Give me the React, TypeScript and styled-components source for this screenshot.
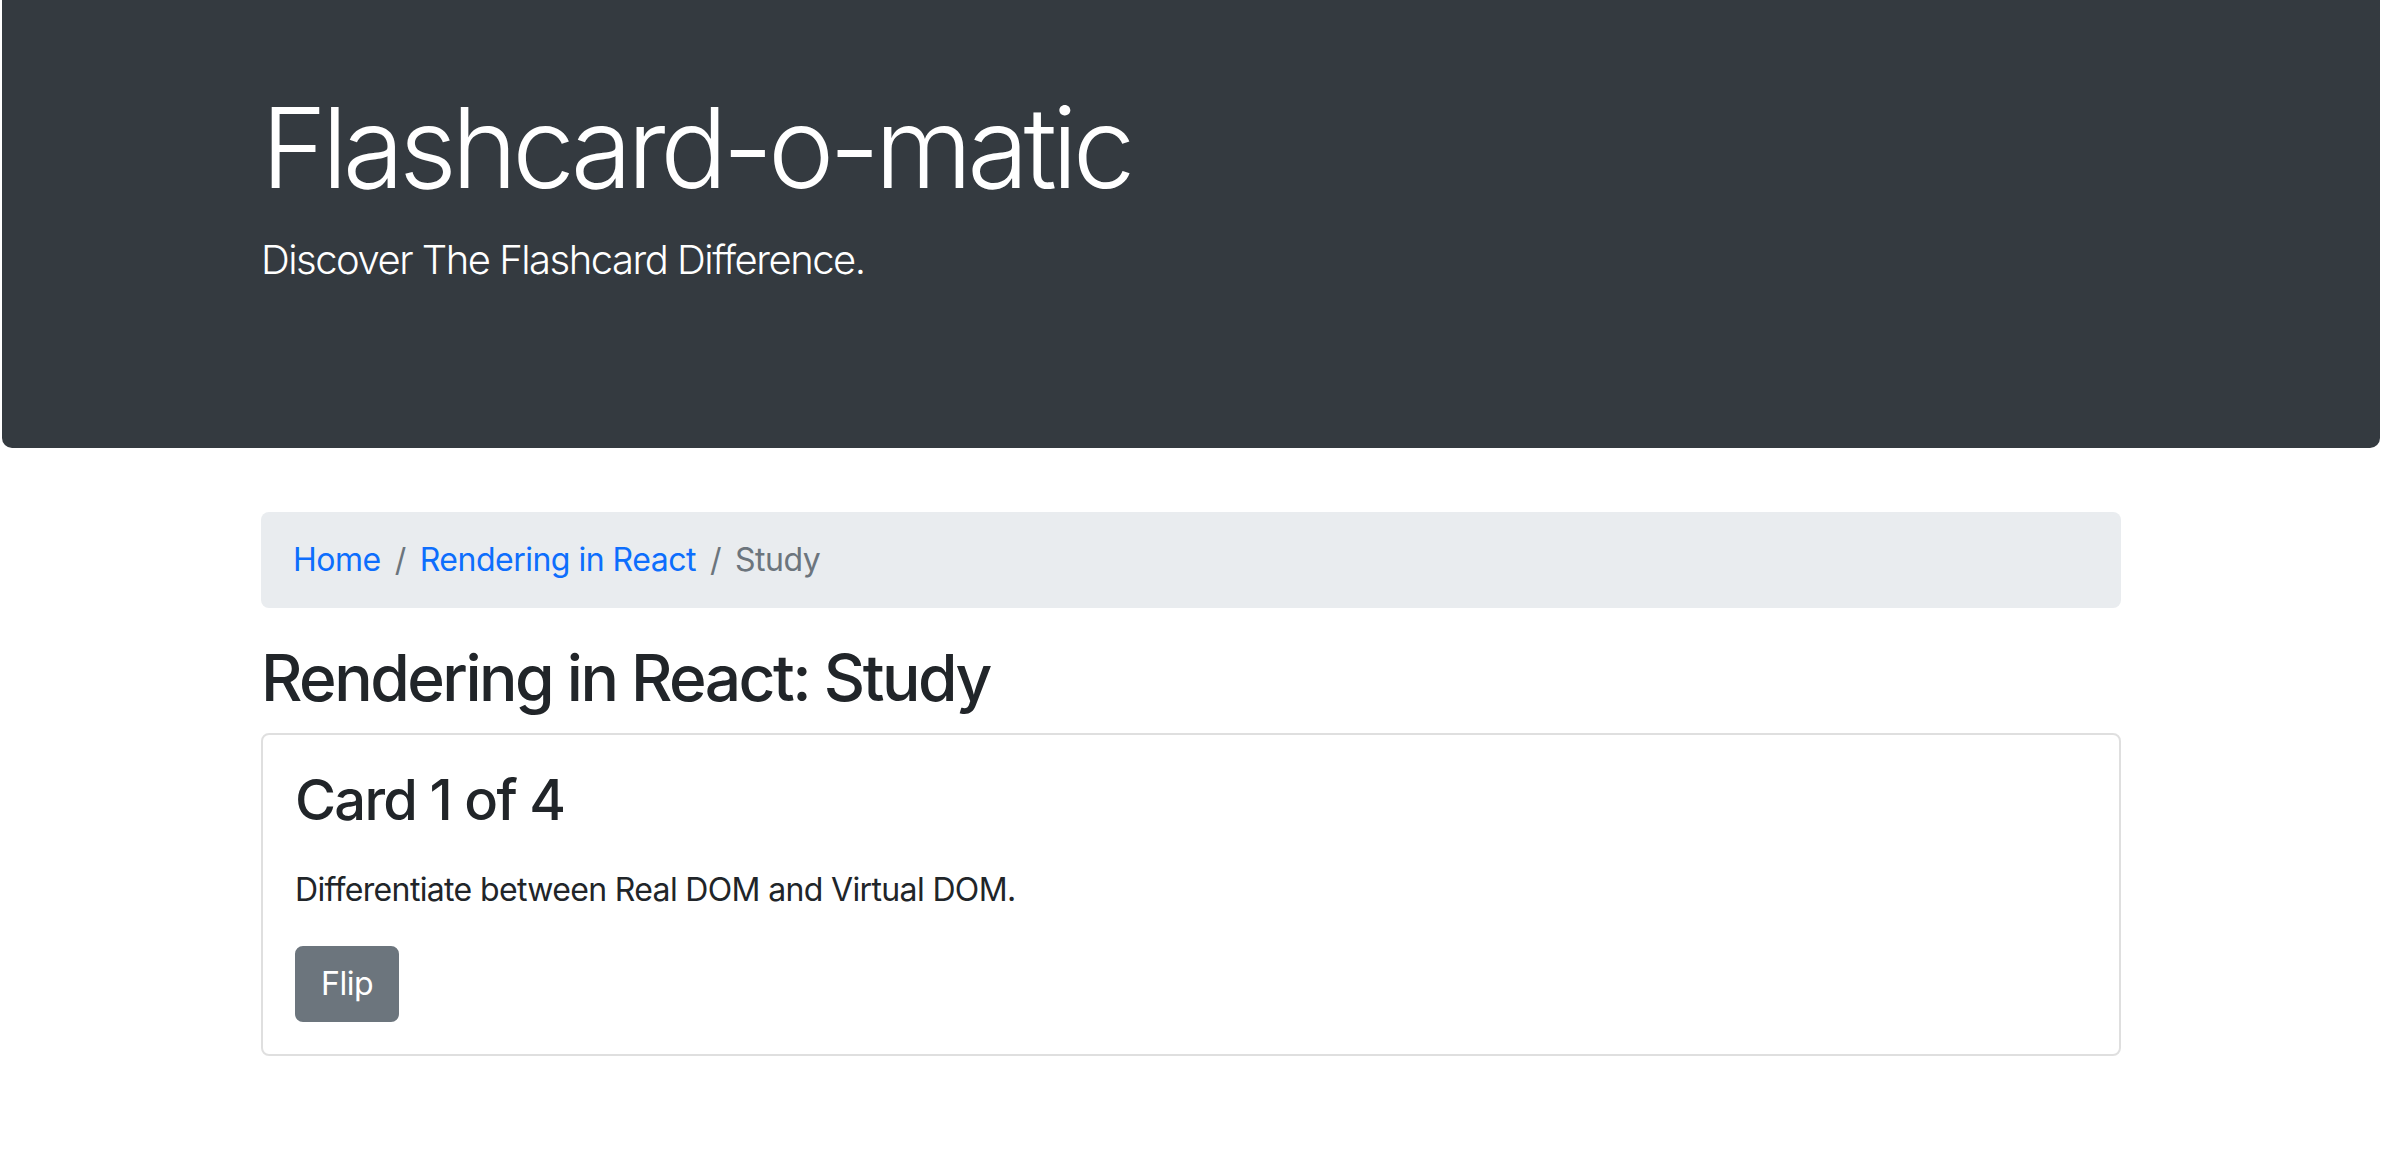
import React from "react";
import styled, { createGlobalStyle } from "styled-components";

const GlobalStyle = createGlobalStyle`
  html, body {
    margin: 0;
    padding: 0;
    background: #ffffff;
  }
  body {
    font-family: Inter, "Noto Sans", "Liberation Sans", sans-serif;
    color: #212529;
    font-size: 32px;
    line-height: 1.5;
  }
  * { box-sizing: border-box; }
`;

const Page = styled.div`
  display: flex;
  flex-direction: column;
  padding-bottom: 120px;
`;

const Jumbotron = styled.header`
  background: #343a40;
  color: #ffffff;
  margin: 0 2px 64px 2px;
  padding: 80px 0 126px;
  border-radius: 0 0 10px 10px;
`;

const Container = styled.div`
  width: 100%;
  max-width: 1860px;
  margin: 0 auto;
`;

const DisplayTitle = styled.h1`
  margin: 0 0 16px;
  font-size: 112px;
  font-weight: 300;
  line-height: 1.2;
  letter-spacing: -5.2px;
`;

const Lead = styled.p`
  margin: 0 0 32px;
  font-size: 40px;
  font-weight: 300;
  line-height: 1.5;
  letter-spacing: -1.5px;
`;

const Breadcrumb = styled.nav`
  display: flex;
  align-items: center;
  background: #e9ecef;
  border-radius: 8px;
  padding: 24px 32px;
  margin-bottom: 32px;
  font-size: 32px;
  line-height: 48px;
  letter-spacing: -0.5px;
`;

const Crumb = styled.a<{ $active?: boolean }>`
  color: ${(p) => (p.$active ? "#6c757d" : "#0d6efd")};
  text-decoration: none;
`;

const Divider = styled.span`
  color: #6c757d;
  padding: 0 14px;
`;

const PageTitle = styled.h2`
  margin: 0 0 16px;
  font-size: 64px;
  font-weight: 500;
  line-height: 1.2;
  letter-spacing: -2.5px;
`;

const Card = styled.section`
  border: 2px solid rgba(0, 0, 0, 0.125);
  border-radius: 8px;
  padding: 32px;
  display: flex;
  flex-direction: column;
  align-items: flex-start;
`;

const CardTitle = styled.h3`
  margin: 0 0 32px;
  font-size: 56px;
  font-weight: 500;
  line-height: 1.2;
  letter-spacing: -1.7px;
`;

const CardText = styled.p`
  margin: 0 0 32px;
  font-size: 32px;
  line-height: 48px;
  letter-spacing: -0.65px;
`;

const Button = styled.button`
  font-family: inherit;
  font-size: 32px;
  line-height: 48px;
  letter-spacing: -0.5px;
  color: #ffffff;
  background: #6c757d;
  border: 2px solid #6c757d;
  border-radius: 8px;
  padding: 12px 24px;
  cursor: pointer;
`;

export default function App() {
  return (
    <>
      <GlobalStyle />
      <Page>
        <Jumbotron>
          <Container>
            <DisplayTitle>Flashcard-o-matic</DisplayTitle>
            <Lead>Discover The Flashcard Difference.</Lead>
          </Container>
        </Jumbotron>
        <Container>
          <Breadcrumb aria-label="breadcrumb">
            <Crumb href="#">Home</Crumb>
            <Divider>/</Divider>
            <Crumb href="#">Rendering in React</Crumb>
            <Divider>/</Divider>
            <Crumb as="span" $active>
              Study
            </Crumb>
          </Breadcrumb>
          <PageTitle>Rendering in React: Study</PageTitle>
          <Card>
            <CardTitle>Card 1 of 4</CardTitle>
            <CardText>Differentiate between Real DOM and Virtual DOM.</CardText>
            <Button type="button">Flip</Button>
          </Card>
        </Container>
      </Page>
    </>
  );
}
